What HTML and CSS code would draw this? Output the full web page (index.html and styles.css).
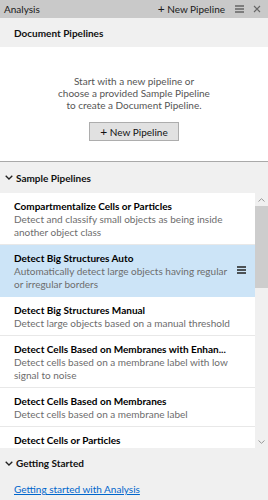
FILE: index.html
```html
<!DOCTYPE html>
<html lang="en">
<head>
    <meta charset="UTF-8">
    <title>Analysis</title>
    <link rel="stylesheet" href="styles.css">
</head>
<body>
    <div class="panel">
        <!-- Title bar -->
        <div class="titlebar">
            <span class="titlebar-name">Analysis</span>
            <span class="titlebar-action"><span class="plus">+</span> New Pipeline</span>
            <svg class="menu-icon" width="9" height="8" viewBox="0 0 9 8"><path d="M0 1h9M0 4h9M0 7h9" stroke="#333" stroke-width="1.2"/></svg>
            <svg class="close-icon" width="8" height="8" viewBox="0 0 8 8"><path d="M1 1l6 6M7 1l-6 6" stroke="#666" stroke-width="1.1"/></svg>
        </div>

        <!-- Document pipelines -->
        <div class="section-head plain">Document Pipelines</div>
        <div class="empty">
            <p class="empty-text">Start with a new pipeline or<br>choose a provided Sample Pipeline<br>to create a Document Pipeline.</p>
            <button class="btn"><span class="plus">+</span> New Pipeline</button>
        </div>

        <!-- Sample pipelines -->
        <div class="section-head">
            <svg class="chevron" width="8" height="5" viewBox="0 0 8 5"><path d="M0.7 0.7L4 4L7.3 0.7" fill="none" stroke="#222" stroke-width="1.3"/></svg>
            Sample Pipelines
        </div>
        <div class="list-wrap">
            <div class="list">
                <div class="item">
                    <div class="item-title">Compartmentalize Cells or Particles</div>
                    <div class="item-desc">Detect and classify small objects as being inside<br>another object class</div>
                </div>
                <div class="item selected">
                    <div class="item-title">Detect Big Structures Auto</div>
                    <div class="item-desc">Automatically detect large objects having regular<br>or irregular borders</div>
                    <svg class="item-menu" width="9" height="8" viewBox="0 0 9 8"><path d="M0 1h9M0 4h9M0 7h9" stroke="#222" stroke-width="1.3"/></svg>
                </div>
                <div class="item">
                    <div class="item-title">Detect Big Structures Manual</div>
                    <div class="item-desc">Detect large objects based on a manual threshold</div>
                </div>
                <div class="item">
                    <div class="item-title">Detect Cells Based on Membranes with Enhan...</div>
                    <div class="item-desc">Detect cells based on a membrane label with low<br>signal to noise</div>
                </div>
                <div class="item">
                    <div class="item-title">Detect Cells Based on Membranes</div>
                    <div class="item-desc">Detect cells based on a membrane label</div>
                </div>
                <div class="item last">
                    <div class="item-title">Detect Cells or Particles</div>
                </div>
            </div>
            <div class="scrollbar">
                <svg class="arrow" width="7" height="4" viewBox="0 0 7 4"><path d="M0.5 3.5L3.5 0.7L6.5 3.5" fill="none" stroke="#999" stroke-width="1"/></svg>
                <div class="thumb"></div>
                <div class="track"></div>
                <svg class="arrow" width="7" height="4" viewBox="0 0 7 4"><path d="M0.5 0.5L3.5 3.3L6.5 0.5" fill="none" stroke="#999" stroke-width="1"/></svg>
            </div>
        </div>

        <!-- Getting started -->
        <div class="section-head short">
            <svg class="chevron" width="8" height="5" viewBox="0 0 8 5"><path d="M0.7 0.7L4 4L7.3 0.7" fill="none" stroke="#222" stroke-width="1.3"/></svg>
            Getting Started
        </div>
        <div class="links">
            <a href="#" class="link">Getting started with Analysis</a>
        </div>
    </div>
</body>
</html>
```

FILE: styles.css
```css
body {
    margin: 0;
    font-family: 'Lato', 'Liberation Sans', sans-serif;
    font-size: 10px;
    color: #111;
    background: #f0f0f0;
}
.panel {
    width: 268px;
    height: 500px;
    display: flex;
    flex-direction: column;
    overflow: hidden;
    background: #f0f0f0;
}
.titlebar {
    height: 18px;
    background: #c9c9c9;
    display: flex;
    align-items: center;
    padding: 0 7px 0 4px;
    color: #1a1a1a;
}
.titlebar-name {
    flex: 1;
}
.plus {
    font-size: 12px;
    line-height: 10px;
}
.menu-icon {
    margin-left: 10px;
}
.close-icon {
    margin-left: 9px;
}
.section-head {
    height: 31px;
    display: flex;
    align-items: center;
    padding-left: 5px;
    font-weight: 700;
    color: #111;
    background: #f0f0f0;
}
.section-head.plain {
    height: 29px;
    padding-left: 14px;
}
.section-head.short {
    height: 30px;
}
.chevron {
    margin-right: 3px;
}
.empty {
    background: #fff;
    padding: 28px 0 20px;
    text-align: center;
    border-bottom: 1px solid #a9a9a9;
}
.empty-text {
    margin: 0 0 11px;
    line-height: 12px;
    color: #555;
}
.btn {
    width: 90px;
    height: 19px;
    padding: 0;
    font: inherit;
    color: #111;
    background: #e1e1e1;
    border: 1px solid #adadad;
}
.list-wrap {
    height: 255px;
    display: flex;
}
.list {
    flex: 1;
    overflow: hidden;
    background: #fff;
}
.item {
    position: relative;
    padding: 6px 14px 5px;
    border-bottom: 1px solid #e8e8e8;
}
.item.selected {
    background: #cce4f7;
    border-bottom-color: #cce4f7;
}
.item.last {
    border-bottom: none;
    padding-bottom: 0;
}
.item-title {
    font-weight: 700;
    line-height: 14px;
    color: #000;
}
.item-desc {
    line-height: 13px;
    color: #6d6d6d;
}
.item-menu {
    position: absolute;
    right: 9px;
    top: 21px;
}
.scrollbar {
    width: 13px;
    display: flex;
    flex-direction: column;
    align-items: center;
    background: #f0f0f0;
}
.arrow {
    margin: 5px 0 4px;
}
.thumb {
    width: 13px;
    height: 82px;
    background: #cdcdcd;
}
.track {
    flex: 1;
}
.links {
    flex: 1;
    padding: 5px 14px 0;
}
.link {
    color: #0066cc;
}
```
